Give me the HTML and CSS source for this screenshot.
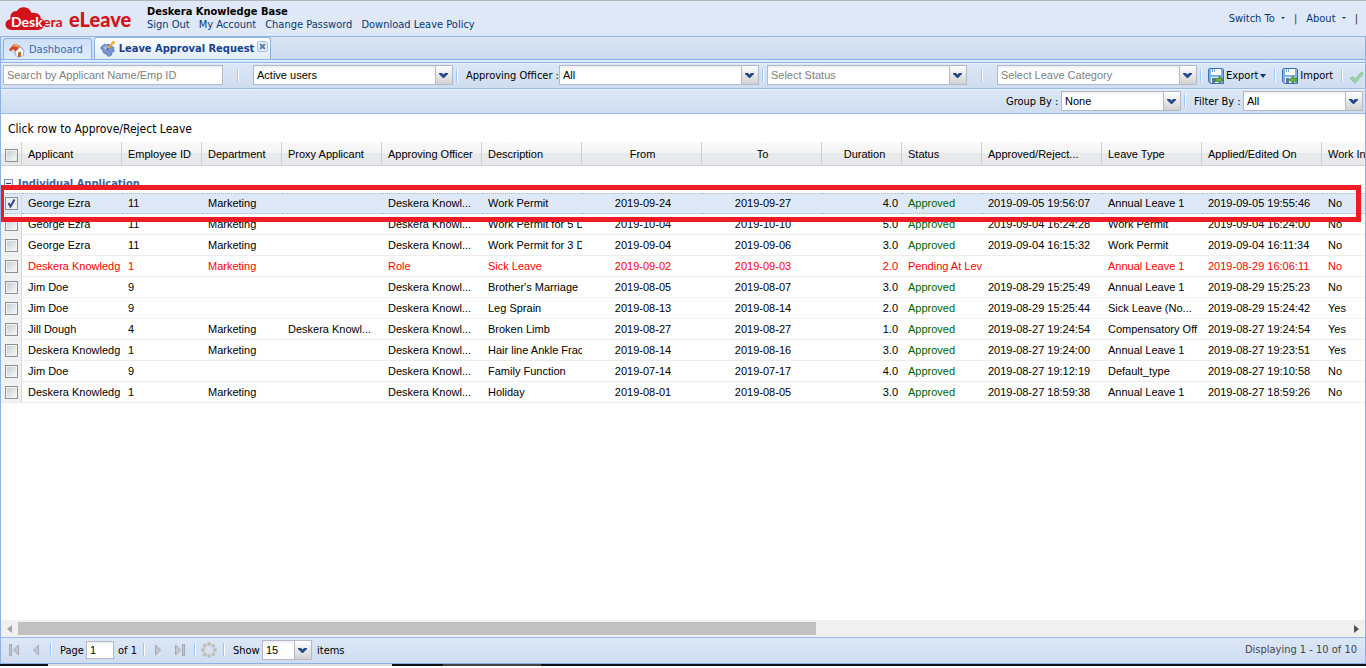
FILE: index.html
```html
<!DOCTYPE html>
<html lang="en">
<head>
<meta charset="utf-8">
<title>Deskera eLeave</title>
<link rel="stylesheet" href="styles.css">
</head>
<body>
<header class="top">
  <div class="brand">
    <svg class="cloud" viewBox="0 0 60 26" width="60" height="26" aria-hidden="true">
      <path fill="#d4121a" d="M7 24C2.500 24 0.500 21 0.500 18.500C0.500 15.500 3 13.500 5.500 13.300C4.500 8 8 4.500 12 5C13.500 2 17 0.500 20.500 1.500C24 2.200 26 5 26.500 7C31 5.500 36.500 9 35.500 12.500C39.500 13.500 40.500 18 38.500 20.500C37.500 23 35 24 32 24Z"/>
      <text class="desk" x="6" y="21">Desk</text>
      <text class="era" x="38" y="21">era</text>
    </svg>
    <span class="product">eLeave</span>
  </div>
  <div class="account">
    <strong>Deskera Knowledge Base</strong>
    <nav class="links"><a href="#">Sign Out</a><a href="#">My Account</a><a href="#">Change Password</a><a href="#">Download Leave Policy</a></nav>
  </div>
  <nav class="menus">
    <a href="#">Switch To <i class="tiny-caret"></i></a><span class="bar">|</span>
    <a href="#">About <i class="tiny-caret"></i></a><span class="bar">|</span>
  </nav>
</header>
<main class="panel">
  <div class="tabs">
    <button class="tab">
      <svg width="16" height="16" viewBox="0 0 16 16" aria-hidden="true"><path fill="#dfe6f0" stroke="#8c9db8" stroke-width=".7" d="M2.500 8l5 5.500 7-2V7L9 3z"/><path fill="#d9481c" d="M0 7.500L5 2l6 1.500L7 10 4 7 1.500 9.500z"/><path fill="#f59a58" d="M5 2l6 1.500L9.500 5.500 3.500 4z"/><path fill="#fff" stroke="#8a9ab5" stroke-width=".7" d="M6.500 9.500L11 5l4.500 4-1 .5v4L9 15.500l-2-2z"/><path fill="#a8732a" d="M9 10.500l3-1v5L9 15.300z"/></svg>
      Dashboard</button>
    <button class="tab active">
      <svg width="16" height="16" viewBox="0 0 16 16" aria-hidden="true"><path fill="#7893d0" stroke="#5672b8" stroke-width=".8" d="M1 6l2-1.500L4.500 3l2 1L9 3l1.500 2L14 6.500l-.5 2L14.500 10l-2.500 1.500-.5 2.500-3 1.500L6 13l-2.500-1L3 9.500 1 8z"/><path fill="#a9bdea" d="M3 6l4-1 2 2-4 2z"/><path fill="#f8b622" stroke="#d08a10" stroke-width=".5" d="M7.500 6.500l4-4 .8-2 3 .5-1.300 1-5 5.500z"/><path fill="#3d5692" d="M7.500 6.500l1.500 1.500-2.500 1z"/></svg>
      Leave Approval Request
      <svg class="close" width="11" height="11" viewBox="0 0 11 11" aria-hidden="true"><rect x=".5" y=".5" width="10" height="10" rx="2" fill="#eaf2fc" stroke="#9dbbe6"/><path d="M3 3l5 5M8 3l-5 5" stroke="#5f7fae" stroke-width="2"/></svg>
    </button>
  </div>
  <div class="tab-base"></div>
  <div class="toolbar">
    <input class="search" type="text" placeholder="Search by Applicant Name/Emp ID" aria-label="Search by Applicant Name/Emp ID">
    <span class="sep wide"></span>
    <select class="combo" aria-label="Users"><option>Active users</option></select>
    <span class="sep"></span>
    <label class="officer" for="officer">Approving Officer :</label>
    <select class="combo" id="officer"><option>All</option></select>
    <span class="sep"></span>
    <select class="combo hint" aria-label="Status"><option>Select Status</option></select>
    <span class="sep wide"></span>
    <select class="combo hint" aria-label="Leave category"><option>Select Leave Category</option></select>
    <span class="sep"></span>
    <button class="tool">
      <svg width="16" height="16" viewBox="0 0 16 16" aria-hidden="true"><path fill="#7fb0e6" stroke="#3a6fb5" d="M.5 1.500l1-1h13l1 1v14h-13l-2-2z"/><path fill="#fff" d="M3 1h10v6H3z"/><path stroke="#7fa6d6" d="M4.500 1v3M6.500 1v3"/><path fill="#eef3f9" d="M3 9h10v6H3z"/><path fill="#5d7796" d="M4 10h3v5H4z"/><path fill="#6db04e" stroke="#2f7420" stroke-width=".8" d="M7 10.500h4V8.300l4.500 3.500-4.500 3.500v-2H7z"/></svg>
      Export<i class="caret"></i></button>
    <span class="sep"></span>
    <button class="tool">
      <svg width="16" height="16" viewBox="0 0 16 16" aria-hidden="true"><path fill="#7fb0e6" stroke="#3a6fb5" d="M.5 1.500l1-1h13l1 1v14h-13l-2-2z"/><path fill="#fff" d="M3 1h10v6H3z"/><path stroke="#7fa6d6" d="M4.500 1v3M6.500 1v3"/><path fill="#eef3f9" d="M3 9h10v6H3z"/><path fill="#5d7796" d="M4 10h3v5H4z"/><path fill="#6db04e" stroke="#2f7420" stroke-width=".8" d="M15.500 10.500h-4V8.300L7 11.800l4.500 3.500v-2h4z"/></svg>
      Import</button>
    <span class="sep"></span>
    <button class="tool" aria-label="Approve"><svg width="16" height="16" viewBox="0 0 16 16" aria-hidden="true"><path fill="#9bd3a4" stroke="#86b890" stroke-width=".8" d="M1 10.500L3.500 8.500 6 11 12.500 4l2 1.500L6.200 15z"/></svg></button>
  </div>
  <div class="toolbar second">
    <label class="group" for="group">Group By :</label>
    <select class="combo short" id="group"><option>None</option></select>
    <span class="sep"></span>
    <label class="filter" for="filter">Filter By :</label>
    <select class="combo short" id="filter"><option>All</option></select>
  </div>
  <p class="tip">Click row to Approve/Reject Leave</p>
  <div class="grid">
    <table>
      <colgroup><col class="c21"><col class="c100"><col class="c80"><col class="c80"><col class="c100"><col class="c100"><col class="c100"><col class="c120"><col class="c120"><col class="c80"><col class="c80"><col class="c120"><col class="c100"><col class="c120"><col class="c100"></colgroup>
      <thead><tr><th><input type="checkbox" aria-label="Select all"></th><th>Applicant</th><th>Employee ID</th><th>Department</th><th>Proxy Applicant</th><th>Approving Officer</th><th>Description</th><th class="mid">From</th><th class="mid">To</th><th class="num">Duration</th><th>Status</th><th>Approved/Reject...</th><th>Leave Type</th><th>Applied/Edited On</th><th>Work In</th></tr></thead>
      <tbody id="rows"><tr class="section"><td colspan="15"><svg width="9" height="9" viewBox="0 0 9 9" aria-hidden="true"><rect x=".5" y=".5" width="8" height="8" fill="#f4f7fb" stroke="#7a95bd"/><path d="M2 4.500h5" stroke="#223a66"/></svg>Individual Application</td></tr></tbody>
    </table>
    <div class="marker"></div>
  </div>
  <div class="scroll"><i class="arrow left"></i><div class="track"><div class="thumb"></div></div><i class="arrow right"></i></div>
  <footer class="pager">
    <button class="page-btn" aria-label="First page"><svg width="16" height="16" viewBox="0 0 16 16"><path fill="#c4c8cc" stroke="#a2a8af" d="M3.500 2.500h2v11h-2zM12.500 3v10L7.500 8z"/></svg></button>
    <button class="page-btn" aria-label="Previous page"><svg width="16" height="16" viewBox="0 0 16 16"><path fill="#c4c8cc" stroke="#a2a8af" d="M10.500 3v10L5.500 8z"/></svg></button>
    <span class="sep"></span>
    <label class="page-label" for="page">Page</label><input class="page-input" id="page" type="text" value="1"><span class="of">of 1</span>
    <span class="sep"></span>
    <button class="page-btn" aria-label="Next page"><svg width="16" height="16" viewBox="0 0 16 16"><path fill="#c4c8cc" stroke="#a2a8af" d="M5.500 3v10l5-5z"/></svg></button>
    <button class="page-btn" aria-label="Last page"><svg width="16" height="16" viewBox="0 0 16 16"><path fill="#c4c8cc" stroke="#a2a8af" d="M3.500 3v10l5-5zM10.500 2.500h2v11h-2z"/></svg></button>
    <span class="sep"></span>
    <button class="page-btn refresh" aria-label="Refresh"><svg width="16" height="16" viewBox="0 0 16 16"><g fill="#bfbdb8"><circle cx="8" cy="2" r="1.900"/><circle cx="12.300" cy="3.700" r="1.900"/><circle cx="14" cy="8" r="1.900"/><circle cx="12.300" cy="12.300" r="1.900"/><circle cx="8" cy="14" r="1.900"/><circle cx="3.700" cy="12.300" r="1.900"/><circle cx="2" cy="8" r="1.900"/><circle cx="3.700" cy="3.700" r="1.900"/></g></svg></button>
    <span class="sep"></span>
    <label class="show" for="size">Show</label><select class="combo size" id="size"><option>15</option></select><span class="items">items</span>
    <span class="total">Displaying 1 - 10 of 10</span>
  </footer>
</main>
<div class="edge"><span class="edge-a"></span><span class="edge-b"></span><span class="edge-c"></span><span class="edge-d"></span><span class="edge-e"></span></div>
<script src="rows.js"></script>
</body>
</html>
```
FILE: styles.css
```css
* { box-sizing: border-box; }
body { margin: 0; height: 100vh; display: flex; flex-direction: column; overflow: hidden; background: #fff; font: 11px/14px "DejaVu Sans Condensed", "DejaVu Sans", sans-serif; color: #000; }
button, input, select { font: inherit; color: inherit; margin: 0; }
button { border: 0; background: none; padding: 0; }
a { color: #15428b; text-decoration: none; }
.top { height: 36px; flex: none; display: flex; background: #dfe8f6; border-top: 1px solid #b5b5b9; padding-left: 5px; }
.top a { color: #083772; }
.brand { width: 142px; display: flex; padding-top: 5px; }
.cloud { flex: none; overflow: visible; }
.desk, .era { font: bold 14px Lato, sans-serif; fill: #fff; }
.era { fill: #d4121a; }
.product { font: 900 20px/26px Lato, sans-serif; color: #d4121a; margin-left: 4px; }
.account { padding-top: 4px; line-height: 13px; }
.account strong { display: block; }
.links { display: flex; gap: 9px; }
.menus { margin-left: auto; display: flex; gap: 9px; padding: 11px 8px 0 0; }
.tiny-caret, .caret { display: inline-block; border: 2px solid transparent; border-top-color: #083772; border-bottom: 0; margin: 0 0 3px 3px; }
.bar { color: #333; }
.panel { flex: 1; min-height: 0; display: flex; flex-direction: column; border: 1px solid #8db2e3; }
.tabs { height: 22px; flex: none; display: flex; gap: 2px; align-items: flex-end; padding-left: 2px; background: linear-gradient(#dbe6f4, #c9d9ee); }
.tab { height: 21px; display: flex; align-items: center; gap: 4px; padding: 2px 8px 0 5px; border: 1px solid #8db2e3; border-bottom: 0; border-radius: 3px 3px 0 0; background: linear-gradient(#cddff7, #dfecfd); color: #416aa3; }
.tab.active { height: 22px; gap: 3px; padding: 0 2px 0 5px; font-weight: bold; color: #15428b; background: linear-gradient(#fff, #deecfd); }
.close { align-self: flex-start; margin-top: 3px; }
.tab-base { height: 4px; flex: none; background: #deecfd; border: solid #8db2e3; border-width: 1px 0; }
.toolbar { height: 26px; flex: none; display: flex; align-items: center; padding: 0 0 2px 2px; border-bottom: 1px solid #99bbe8; border-top: 1px solid #e9f1fb; background: linear-gradient(#dbe7f6, #cfddf0); }
.toolbar.second { height: 25px; justify-content: flex-end; padding-right: 2px; }
.search, .combo, .page-input { height: 20px; flex: none; border: 1px solid #b5b8c8; background: #fff linear-gradient(#ececec, #fff 3px); padding: 0 3px; border-radius: 0; outline: 0; font: 11px/16px "Liberation Sans", Arial, sans-serif; }
.search { width: 220px; }
.search::placeholder { color: #808080; opacity: 1; }
.combo { width: 200px; appearance: none; padding: 0 18px 0 3px; background: url("data:image/svg+xml,%3Csvg xmlns='http://www.w3.org/2000/svg' width='17' height='18'%3E%3ClinearGradient id='g' x2='0' y2='1'%3E%3Cstop stop-color='%23fff'/%3E%3Cstop offset='1' stop-color='%23d2d2d2'/%3E%3C/linearGradient%3E%3Cpath fill='url(%23g)' d='M0 0h17v18H0z'/%3E%3Cpath stroke='%23b5b8c8' d='M.5 0v18'/%3E%3Cpath fill='%23264888' d='M4 7h3l1.500 1.500L10 7h3v1l-4 4H8L4 8z'/%3E%3C/svg%3E") right top no-repeat, linear-gradient(#ececec, #fff 3px); }
.combo.hint { color: #808080; }
.combo.short { width: 120px; }
.sep { width: 2px; height: 13px; flex: none; margin: 0 3px; border-left: 1px solid #98c8ff; border-right: 1px solid #fff; }
.sep.wide { margin: 0 14px; }
.officer { width: 99px; padding-left: 5px; }
.toolbar label { white-space: nowrap; padding-top: 2px; }
.group { width: 55px; }
.filter { width: 54px; padding-left: 5px; }
.tool { display: flex; align-items: center; gap: 2px; margin: 2px 5px 0 3px; flex: none; }
.tool:last-child { margin-right: 0; }
.caret { border-width: 4px 3px 0; margin: 0; }
.tip { margin: 0; padding: 8px 7px 5px; font-size: 12px; line-height: 15px; flex: none; }
.grid { position: relative; flex: 1; min-height: 0; overflow: hidden; font: 11px/13px "Liberation Sans", Arial, sans-serif; }
table { table-layout: fixed; width: 1421px; border-collapse: separate; border-spacing: 0; }
.c21 { width: 21px; } .c80 { width: 80px; } .c100 { width: 100px; } .c120 { width: 120px; }
th, td { padding: 0 4px 0 6px; text-align: left; font-weight: normal; white-space: nowrap; overflow: hidden; }
th { height: 24px; padding-top: 2px; background: linear-gradient(#f9f9f9, #f4f4f5 50%, #e9eaec 50%, #e7e8eb); border-right: 1px solid #d0d0d0; border-bottom: 1px solid #d0d0d0; }
th.mid, td.mid { text-align: center; }
th.num { text-align: center; padding-left: 10px; }
td.num { text-align: right; }
tbody td { height: 21px; border-bottom: 1px solid #ededed; }
th:first-child, td:first-child { padding: 0 0 0 4px; }
th:first-child { padding-top: 3px; }
tbody td:first-child { background: #f1f2f4; border-right: 1px solid #d6d9de; }
tbody .section td { height: 27px; background: #fff; border: 0; padding: 7px 0 0 3px; color: #3764a0; font: bold 11px/13px "DejaVu Sans Condensed", sans-serif; }
.section svg { margin-right: 5px; vertical-align: -1px; }
.late td { color: #f00; }
tbody .ok { color: #006400; }
.picked td, tbody .picked td:first-child { background: #dfe8f6; border-top: 1px dotted #a3bae9; border-bottom: 1px dotted #a3bae9; }
input[type="checkbox"] { appearance: none; display: block; width: 13px; height: 13px; border: 1px solid #8e8f8f; background: linear-gradient(135deg, #c9cdd3, #f6f6f6) content-box #f4f4f4; padding: 1px; }
input[type="checkbox"]:checked { background: url("data:image/svg+xml,%3Csvg xmlns='http://www.w3.org/2000/svg' width='11' height='11'%3E%3Cpath fill='none' stroke='%2331478f' stroke-width='2' d='M2.500 5l2 3.500L8.500 1.500'/%3E%3C/svg%3E") #eceef2; }
.marker { position: absolute; left: -2px; right: 4px; top: 43px; height: 37px; border: 5px solid #ed1c24; }
.scroll { height: 17px; flex: none; display: flex; align-items: center; background: #f0f0f0; padding: 0 6px; }
.track { flex: 1; height: 13px; margin: 0 6px; }
.thumb { width: 60%; height: 13px; background: #c1c1c1; }
.arrow { border: 4px solid transparent; }
.arrow.left { border-width: 4px 5px 4px 0; border-right-color: #a3a3a3; }
.arrow.right { border-width: 4px 0 4px 5px; border-left-color: #505050; }
.pager { height: 26px; flex: none; display: flex; align-items: center; border-top: 1px solid #99bbe8; background: linear-gradient(#dbe7f6, #cfddf0); padding: 0 8px 2px 5px; }
.page-btn { width: 16px; height: 16px; margin-right: 6px; }
.page-btn svg { display: block; }
.pager .sep { margin: 0 8px 0 0; }
.pager .sep:has(+ .page-btn) { margin-right: 5px; }
.page-label { width: 26px; }
.page-label, .of, .show, .items { padding-top: 2px; }
.page-input { width: 28px; height: 18px; }
.of { width: 29px; padding-left: 4px; }
.show { width: 29px; }
.combo.size { width: 50px; }
.items { padding-left: 5px; }
.total { margin-left: auto; color: #444; }
.edge { height: 4px; flex: none; display: flex; border-bottom: 2px solid #fff; }
.edge-a { width: 48px; background: #0b0e14; }
.edge-b { width: 344px; background: #dcdcdc; }
.edge-c { width: 51px; background: #0b0e14; }
.edge-d { width: 98px; background: #444; }
.edge-e { flex: 1; background: #0b0e14; }
```
FILE: rows.js
```js
const officer = "Deskera Knowl...";
const rows = [
  ["George Ezra", "11", "Marketing", "", officer, "Work Permit", "2019-09-24", "2019-09-27", "4.0", "Approved", "2019-09-05 19:56:07", "Annual Leave 1", "2019-09-05 19:55:46", "No"],
  ["George Ezra", "11", "Marketing", "", officer, "Work Permit for 5 D", "2019-10-04", "2019-10-10", "5.0", "Approved", "2019-09-04 16:24:28", "Work Permit", "2019-09-04 16:24:00", "No"],
  ["George Ezra", "11", "Marketing", "", officer, "Work Permit for 3 D", "2019-09-04", "2019-09-06", "3.0", "Approved", "2019-09-04 16:15:32", "Work Permit", "2019-09-04 16:11:34", "No"],
  ["Deskera Knowledg", "1", "Marketing", "", "Role", "Sick Leave", "2019-09-02", "2019-09-03", "2.0", "Pending At Lev", "", "Annual Leave 1", "2019-08-29 16:06:11", "No"],
  ["Jim Doe", "9", "", "", officer, "Brother's Marriage", "2019-08-05", "2019-08-07", "3.0", "Approved", "2019-08-29 15:25:49", "Annual Leave 1", "2019-08-29 15:25:23", "No"],
  ["Jim Doe", "9", "", "", officer, "Leg Sprain", "2019-08-13", "2019-08-14", "2.0", "Approved", "2019-08-29 15:25:44", "Sick Leave (No...", "2019-08-29 15:24:42", "Yes"],
  ["Jill Dough", "4", "Marketing", officer, officer, "Broken Limb", "2019-08-27", "2019-08-27", "1.0", "Approved", "2019-08-27 19:24:54", "Compensatory Off", "2019-08-27 19:24:54", "Yes"],
  ["Deskera Knowledg", "1", "Marketing", "", officer, "Hair line Ankle Frac", "2019-08-14", "2019-08-16", "3.0", "Approved", "2019-08-27 19:24:00", "Annual Leave 1", "2019-08-27 19:23:51", "Yes"],
  ["Jim Doe", "9", "", "", officer, "Family Function", "2019-07-14", "2019-07-17", "4.0", "Approved", "2019-08-27 19:12:19", "Default_type", "2019-08-27 19:10:58", "No"],
  ["Deskera Knowledg", "1", "Marketing", "", officer, "Holiday", "2019-08-01", "2019-08-05", "3.0", "Approved", "2019-08-27 18:59:38", "Annual Leave 1", "2019-08-27 18:59:26", "No"]
];
const body = document.getElementById("rows");
rows.forEach((row, index) => {
  const tr = body.insertRow();
  if (index === 0) tr.className = "picked";
  if (row[9].startsWith("Pending")) tr.className = "late";
  const box = document.createElement("input");
  box.type = "checkbox";
  box.checked = index === 0;
  box.setAttribute("aria-label", "Select " + row[0]);
  tr.insertCell().append(box);
  row.forEach((value, column) => {
    const td = tr.insertCell();
    td.textContent = value;
    if (column === 6 || column === 7) td.className = "mid";
    if (column === 8) td.className = "num";
    if (value === "Approved") td.className = "ok";
  });
});
```
